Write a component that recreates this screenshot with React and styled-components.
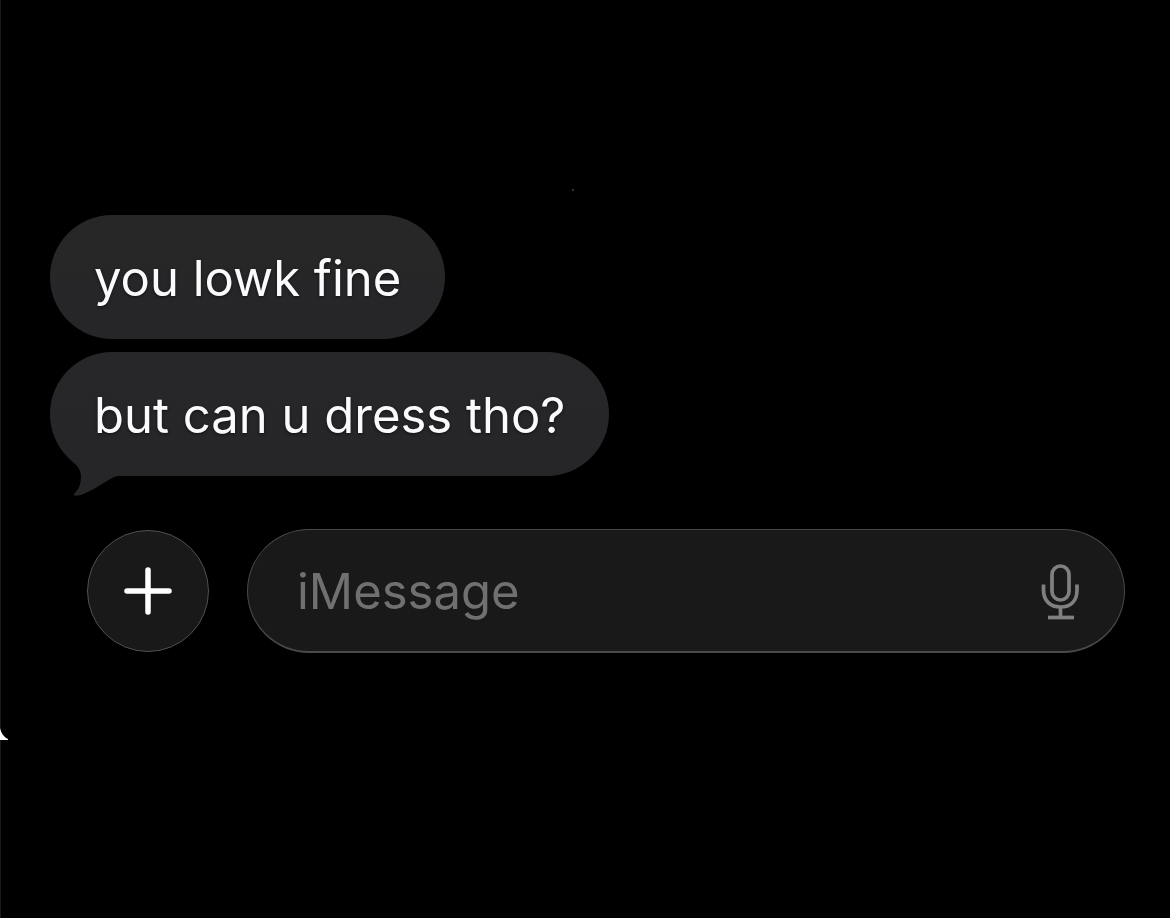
import React, { useState } from "react";
import styled, { createGlobalStyle } from "styled-components";

const GlobalStyle = createGlobalStyle`
  * {
    box-sizing: border-box;
  }
  body {
    margin: 0;
    background: #000;
    font-family: Inter, "Liberation Sans", sans-serif;
  }
`;

const Page = styled.main`
  position: relative;
  min-height: 100vh;
  padding: 215px 45px 60px 49px;
  border-left: 1px solid #1a1a1a;
  background: #000;
  color: #fafafc;
`;

const MessageList = styled.ul`
  display: flex;
  flex-direction: column;
  align-items: flex-start;
  gap: 13px;
  margin: 0;
  padding: 0;
  list-style: none;
`;

const Bubble = styled.li`
  position: relative;
  padding: 34px 44px 30px;
  border-radius: 62px;
  background: linear-gradient(
    ${({ $last }) => ($last ? "#272729, #262629" : "#272727, #262629")}
  );
  font-size: 49px;
  line-height: 60px;
  text-shadow: 0 1px 3px #111;
`;

const Tail = styled.svg`
  position: absolute;
  left: 16px;
  bottom: -20px;
  width: 56px;
  height: 44px;
  fill: #262629;
`;

const Composer = styled.form`
  display: flex;
  align-items: center;
  gap: 38px;
  margin-top: 53px;
  padding-left: 37px;
`;

const AddButton = styled.button`
  display: flex;
  flex: none;
  align-items: center;
  justify-content: center;
  width: 122px;
  height: 122px;
  padding: 0;
  border: 1px solid #505050;
  border-radius: 50%;
  background: #191919;
  color: #fff;
  cursor: pointer;
`;

const Field = styled.div`
  display: flex;
  flex: 1;
  align-items: center;
  min-width: 0;
  height: 124px;
  padding: 2px 45px 0 49px;
  border: 1px solid #484848;
  border-bottom: 2px solid #4a4a4a;
  border-radius: 62px;
  background: #191919;
`;

const MessageInput = styled.input`
  flex: 1;
  min-width: 0;
  padding: 0;
  border: 0;
  outline: 0;
  background: transparent;
  color: #fafafc;
  font: inherit;
  font-size: 49px;
  line-height: 60px;

  &::placeholder {
    color: #707070;
    opacity: 1;
  }
`;

const MicButton = styled.button`
  display: flex;
  flex: none;
  padding: 0;
  border: 0;
  background: transparent;
  color: #808080;
  cursor: pointer;
`;

const EdgeMark = styled.svg`
  position: absolute;
  left: -1px;
  top: 728px;
  fill: #fff;
`;

const Speck = styled.span`
  position: absolute;
  left: 571px;
  top: 189px;
  width: 2px;
  height: 2px;
  background: #333;
`;

const messages = ["you lowk fine", "but can u dress tho?"];

export default function App() {
  const [text, setText] = useState("");

  return (
    <>
      <GlobalStyle />
      <Page>
        <Speck />
        <MessageList>
          {messages.map((message, key) => (
            <Bubble key={key} $last={key === messages.length - 1}>
              {message}
              {key === messages.length - 1 && (
                <Tail viewBox="0 0 56 44" aria-hidden="true">
                  <path d="M4 7C11 13 15 18 15 24C15 32 13 37 8 42C7 44 10 44 15 43C26 39 37 31 48 25L52 24L44 4Z" />
                </Tail>
              )}
            </Bubble>
          ))}
        </MessageList>
        <Composer onSubmit={(e) => e.preventDefault()}>
          <AddButton type="button" aria-label="Add attachment">
            <svg width="48" height="48" viewBox="0 0 48 48" fill="none">
              <path
                d="M24 3V45M3 24H45"
                stroke="currentColor"
                strokeWidth="5.500"
                strokeLinecap="round"
              />
            </svg>
          </AddButton>
          <Field>
            <MessageInput
              type="text"
              aria-label="Message"
              placeholder="iMessage"
              value={text}
              onChange={(e) => setText(e.target.value)}
            />
            <MicButton type="button" aria-label="Dictate">
              <svg
                width="38"
                height="56"
                viewBox="0 0 38 56"
                fill="none"
                stroke="currentColor"
                strokeWidth="3.700"
              >
                <rect x="11" y="2" width="17" height="34" rx="8.500" />
                <path d="M2.500 20.500V26C2.500 37 9.500 43 19.500 43S36 37 36 26V20.500M19.500 43V53" />
                <path d="M7 53.500H33" />
              </svg>
            </MicButton>
          </Field>
        </Composer>
        <EdgeMark width="8" height="12" viewBox="0 0 8 12" aria-hidden="true">
          <path d="M0 0C1 5 4 9 8 11V12H0Z" />
        </EdgeMark>
      </Page>
    </>
  );
}
